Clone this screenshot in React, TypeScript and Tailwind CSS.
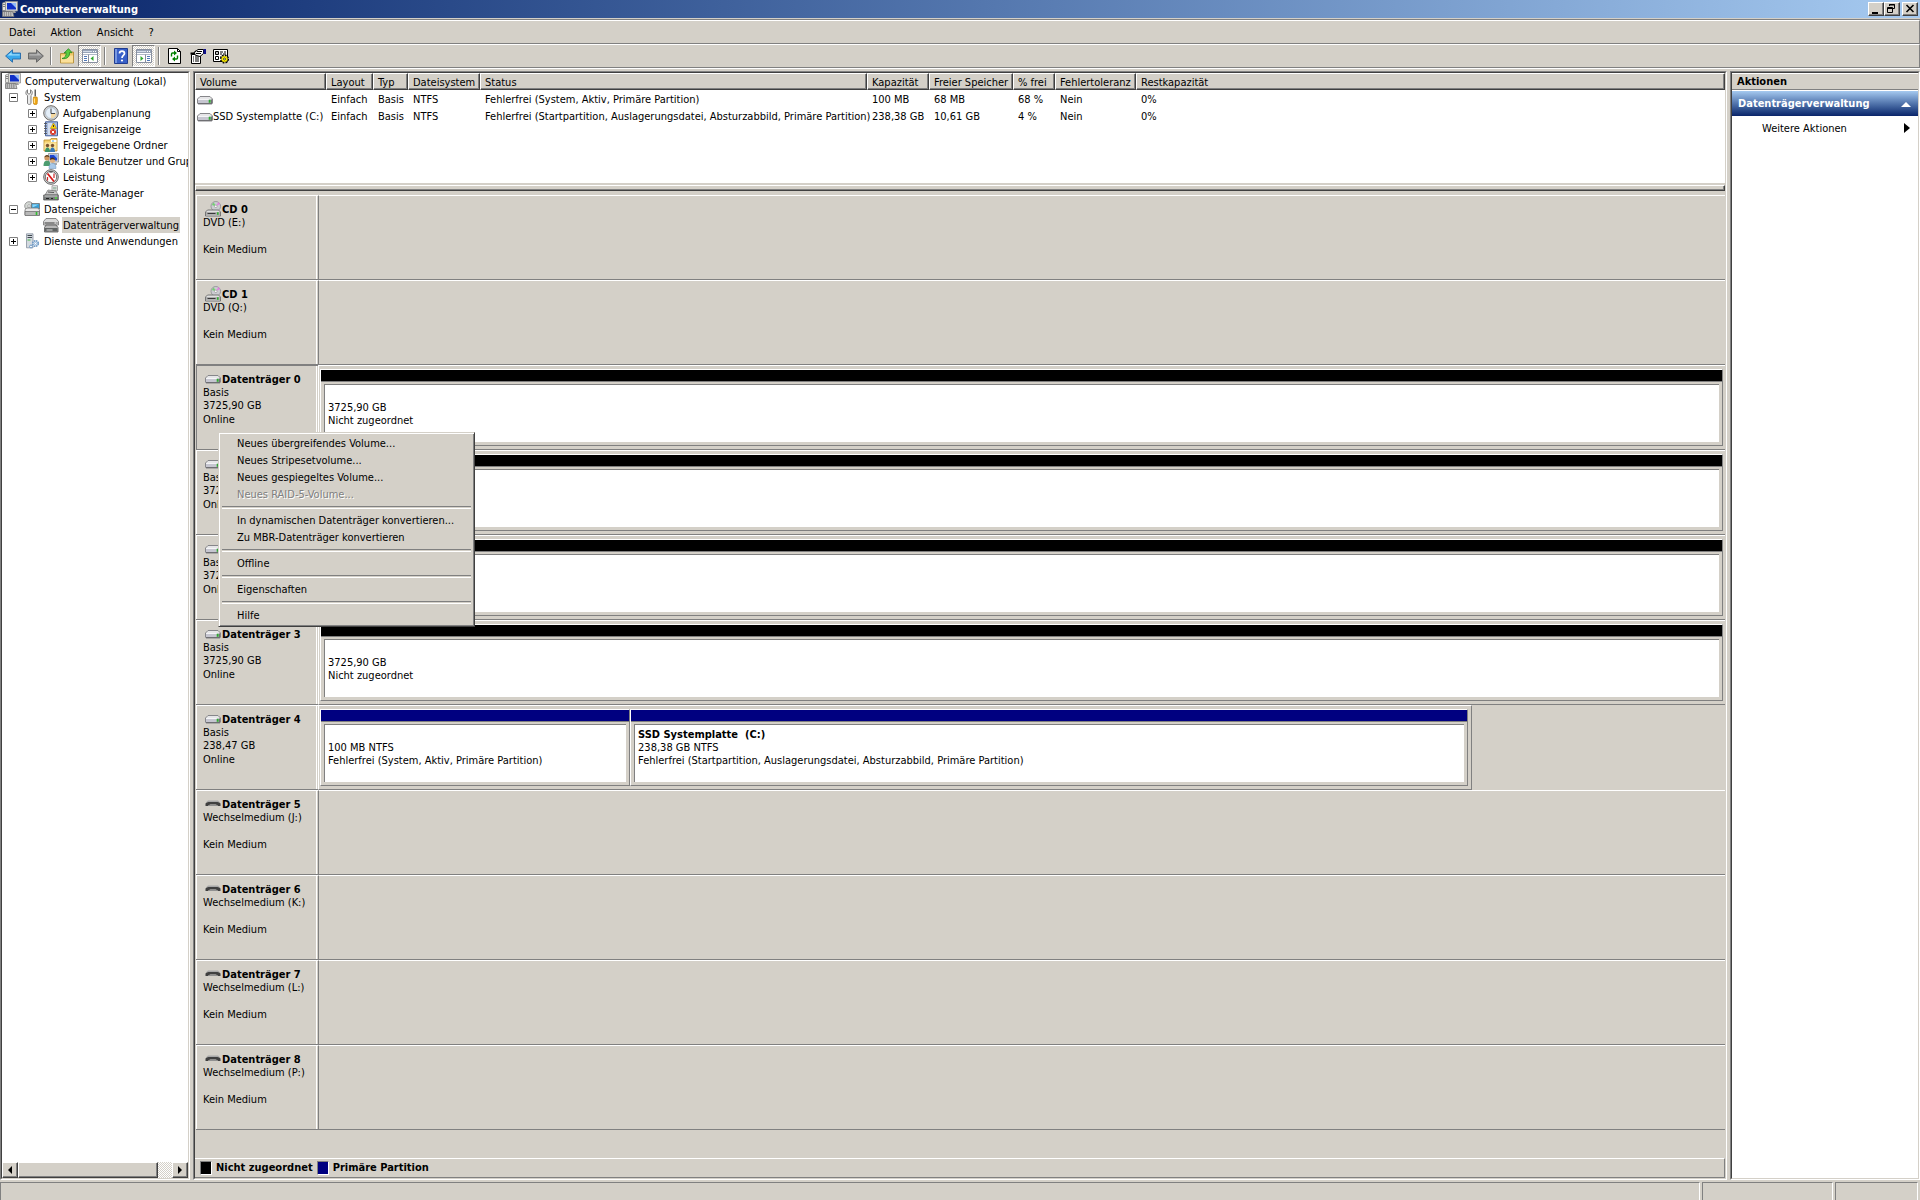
import React from 'react';
import clsx from 'clsx';

interface TreeNode {
  label: string;
  level: number;
  icon: React.ReactNode;
  state?: 'open' | 'closed';
  selected?: boolean;
}

interface Volume {
  name: string;
  layout: string;
  type: string;
  fs: string;
  status: string;
  capacity: string;
  free: string;
  percent: string;
  fault: string;
  overhead: string;
}

interface Partition {
  title?: string;
  size: string;
  status: string;
  primary?: boolean;
  className: string;
}

interface Disk {
  name: string;
  kind: 'cd' | 'disk' | 'removable';
  lines: [string, string, string];
  selected?: boolean;
  partial?: boolean;
  partitions?: Partition[];
}

const RAISED =
  'border border-white border-r-[#404040] border-b-[#404040] bg-[#d4d0c8] shadow-[inset_-1px_-1px_0_#808080]';
const DITHER = 'bg-[repeating-conic-gradient(#fff_0_25%,#d4d0c8_0_50%)] bg-[length:2px_2px]';

const Icon = ({ children }: { children: React.ReactNode }) => (
  <svg viewBox="0 0 16 16" className="h-4 w-4 shrink-0" aria-hidden="true">
    {children}
  </svg>
);

const ComputerIcon = () => (
  <Icon>
    <path d="M.5 2l3-1v8.500H.5z" fill="#e4e4e0" stroke="#8a8a8a" strokeWidth=".8" />
    <path d="M1 3.500h2M1 5.500h2" stroke="#666" strokeWidth=".8" />
    <path d="M3.500.5h12v9.500h-12z" fill="#dcdcd8" stroke="#909090" strokeWidth=".8" />
    <path d="M5 2h9v6.500H5z" fill="#1030c8" />
    <path d="M9 2h5v5z" fill="#90b8f8" />
    <path d="M8 10h5l1 2H8z" fill="#a0a0a0" />
    <path d="M.5 10.500h10l1.500 5H.5z" fill="#d8d8d8" stroke="#707070" strokeWidth=".8" />
    <path d="M1.500 12h8.500M1.500 14h9" stroke="#505050" strokeDasharray="1.500 .7" />
  </Icon>
);

const ToolsIcon = () => (
  <Icon>
    <path
      d="M3.500.8v3.400l1.500 1 1.500-1V.8C8 1.600 8.500 3 8.200 4.200 8 5.500 7.600 6 7 6.500V14.500c-.5 1.200-3 1.200-3.500 0V6.500C2.500 6 1.800 5 1.900 3.800 2 2.300 2.700 1.300 3.500.8z"
      fill="#ececec"
      stroke="#707070"
      strokeWidth=".9"
    />
    <path d="M10.500.5h1.500v7h-1.500z" fill="#606060" />
    <path d="M9.500 8h3.600l.4 2.500-.4 4.500c-.8.900-2.700.900-3.500 0l-.4-4.500z" fill="#f0a818" stroke="#b87808" strokeWidth=".6" />
    <path d="M10.500 9.500v4.500" stroke="#ffe08c" />
  </Icon>
);

const ClockIcon = () => (
  <Icon>
    <circle cx="8" cy="8" r="7.300" fill="#d4d4d4" stroke="#686868" />
    <circle cx="8" cy="8" r="5.500" fill="#e4eef8" stroke="#9ab" strokeWidth=".6" />
    <path d="M8 8h5.300A5.300 5.300 0 0 1 8 13.300z" fill="#f4d8a0" />
    <path d="M8 3.500V8.500h4" fill="none" stroke="#444" />
  </Icon>
);

const EventIcon = () => (
  <Icon>
    <path d="M2.500.8h12v14h-12z" fill="#a8bce0" stroke="#46609c" />
    <path d="M5 3h4M5 5h4M5 7h3M5 9h3M5 11h3M5 13h3" stroke="#fff" />
    <path d="M1 2.500h3M1 5h3M1 7.500h3M1 10h3M1 12.500h3" stroke="#555" strokeWidth=".9" />
    <path d="M10.500 2l3.200 5.500H7.300z" fill="#ffd200" stroke="#a88000" strokeWidth=".5" />
    <path d="M10.500 4v2" stroke="#333" />
    <circle cx="10" cy="11" r="3" fill="#d83828" />
    <path d="M8.800 9.800l2.400 2.400m0-2.400l-2.400 2.400" stroke="#fff" />
  </Icon>
);

const SharedFolderIcon = () => (
  <Icon>
    <path d="M1 3h6l1-1.500h6V14H1z" fill="#f4cf6c" stroke="#b88a28" strokeWidth=".8" />
    <path d="M8 3h5.500v2H8z" fill="#fff" />
    <path d="M9 4h2" stroke="#48a0e0" />
    <path d="M1.500 5.500h12V13h-12z" fill="#fbe39a" />
    <circle cx="4.500" cy="8.500" r="1.700" fill="#7a5230" />
    <path d="M2 15c0-3 1-4.500 2.500-4.500S7 12 7 15z" fill="#3c9468" />
    <circle cx="9.500" cy="8.500" r="1.700" fill="#7a5230" />
    <path d="M7 15c0-3 1-4.500 2.500-4.500S12 12 12 15z" fill="#3878b8" />
  </Icon>
);

const UsersIcon = () => (
  <Icon>
    <path d="M5.500.5h10V9h-10z" fill="#e0e0dc" stroke="#888" strokeWidth=".7" />
    <path d="M6.800 1.800h7.400v5.700H6.800z" fill="#1c44d0" />
    <path d="M10.500 1.800h3.700v3.700z" fill="#88b0f4" />
    <path d="M9 10h5v2H9z" fill="#aaa" />
    <circle cx="4" cy="5" r="2.600" fill="#d09860" />
    <path d="M1.400 4.500C1.400 1 6.600 1 6.600 4.500 5 3.300 3 3.300 1.400 4.500z" fill="#5c3c1c" />
    <path d="M.5 13c0-4 1.500-5.200 3.500-5.200S7.500 9 7.500 13z" fill="#4c9c70" />
    <circle cx="9.500" cy="7.500" r="2.500" fill="#e0b080" />
    <path d="M7 7c0-3.300 5-3.300 5 0-1.500-1-3.500-1-5 0z" fill="#4a3018" />
    <path d="M6 15.500c0-4 1.500-5.300 3.500-5.300s3.500 1.300 3.500 5.300z" fill="#a8c8e8" stroke="#6890b8" strokeWidth=".5" />
  </Icon>
);

const PerfIcon = () => (
  <Icon>
    <circle cx="8" cy="8" r="7.300" fill="#d8d8d8" stroke="#666" />
    <circle cx="8" cy="8" r="5.700" fill="#fff" stroke="#555" strokeWidth=".8" />
    <path d="M4.500 4.500l6.500 8" stroke="#d81818" strokeWidth="1.800" />
    <path d="M4.500 8v3.500M11 4.500V9" stroke="#c82828" strokeWidth="1.200" />
    <path d="M6.500 3h3" stroke="#333" />
  </Icon>
);

const DeviceIcon = () => (
  <Icon>
    <path d="M9 .7h5.500v5H9z" fill="#e8e8e8" stroke="#888" strokeWidth=".7" />
    <path d="M10 2h3.500v2.500H10z" fill="#a8c0b0" />
    <path d="M5 5l8 1 2 4H2z" fill="#c8c8c8" stroke="#707070" strokeWidth=".7" />
    <path d="M5 7l6 .5" stroke="#555" />
    <path d="M.7 10h14.600v5H.7z" fill="#7c8080" stroke="#444" strokeWidth=".7" />
    <path d="M1.500 11h13" stroke="#d0d0d0" />
    <path d="M3 13.500h3M8 13.500h2" stroke="#222" />
    <path d="M12 13h2" stroke="#50e040" strokeWidth="1.500" />
  </Icon>
);

const StorageIcon = () => (
  <Icon>
    <circle cx="5" cy="5" r="4.300" fill="#d4d8d4" stroke="#888" strokeWidth=".8" />
    <circle cx="5" cy="5" r="1.300" fill="#fff" stroke="#888" strokeWidth=".6" />
    <path d="M7.500 2.500h8V8h-8z" fill="#38a0d8" stroke="#707070" strokeWidth=".8" />
    <path d="M8.500 3.500h6l-6 3z" fill="#90d8f8" />
    <path d="M1 8.500L3 7h11l1.500 2v5H1z" fill="#e8e8e8" stroke="#777" strokeWidth=".8" />
    <path d="M1 10.500h14.500v4H1z" fill="#b8b8b8" stroke="#666" strokeWidth=".7" />
    <path d="M12.500 11v3" stroke="#30c030" strokeWidth="1.600" />
  </Icon>
);

const DiskMgmtIcon = () => (
  <Icon>
    <path d="M3 1.500h10l2.500 3V8H.5V4.500z" fill="#d8d8d8" stroke="#707070" strokeWidth=".8" />
    <path d="M1.500 5h13v2h-13z" fill="#888" />
    <path d="M3 8h10l2 2.500V15H1.500v-4.500z" fill="#b8b8b8" stroke="#505050" strokeWidth=".8" />
    <path d="M2 11h12.500v3.500H2z" fill="#606464" />
    <path d="M3.500 13h6" stroke="#ddd" />
    <path d="M11.500 6h2" stroke="#fff" />
  </Icon>
);

const ServicesIcon = () => (
  <Icon>
    <path d="M2.500.8H9v14H2.500z" fill="#d4dae0" stroke="#8890a0" strokeWidth=".8" />
    <path d="M3.500 2.500H8M3.500 4.500H8" stroke="#404850" />
    <path d="M3.500 7h3" stroke="#40b840" />
    <circle cx="11.500" cy="10.500" r="2.800" fill="#dce8f4" stroke="#6c98c4" strokeWidth="1.600" strokeDasharray="1.600 .6" />
    <circle cx="7" cy="13.500" r="1.400" fill="#fff" stroke="#6c98c4" />
    <circle cx="11.500" cy="10.500" r="1" fill="#fff" stroke="#7ca4cc" strokeWidth=".6" />
  </Icon>
);

const DriveIcon = () => (
  <Icon>
    <path d="M3 4.500h10L15.500 7v4q0 .8-1 .8h-13q-1 0-1-.8V7z" fill="#e6e6e8" stroke="#86868a" />
    <path d="M1 7.500h14v3.800H1z" fill="#c6c6d0" />
    <path d="M1 7.500h11" stroke="#f4f4f6" />
    <path d="M1 11.700h14" stroke="#606064" />
    <path d="M12.700 7.800v3" stroke="#30a830" strokeWidth="2" />
    <path d="M14.500 7.500v3.700" stroke="#707074" />
  </Icon>
);

const RemovableIcon = () => (
  <Icon>
    <path d="M3 4.500h10l2 2H1z" fill="#a8a8a8" />
    <path d="M.5 7.500Q1.500 6 3.500 6h9q2 0 3 1.500V10H13q-1-1.500-2.500-1.500h-5Q4 8.500 3 10H.5z" fill="#404040" />
    <path d="M3 10q1-1.500 2.500-1.500h5Q12 8.500 13 10z" fill="#909090" />
  </Icon>
);

const CdIcon = () => (
  <Icon>
    <circle cx="10.800" cy="5.300" r="4.800" fill="#ccccd2" stroke="#8c8c90" strokeWidth=".8" />
    <path d="M10.800 5.300L6.800 4l2-2.500z" fill="#70d070" />
    <path d="M10.800 5.300L13.500 1l1.500 2z" fill="#e080dc" />
    <circle cx="10.800" cy="5.300" r="1.300" fill="#fff" stroke="#888" strokeWidth=".6" />
    <path d="M2.500 9h11l2 2v4H.5v-4z" fill="#e0e0e0" stroke="#6c6c6c" strokeWidth=".9" />
    <path d="M1 11h14v3.500H1z" fill="#b0b0b0" />
    <path d="M2.500 12.500h8" stroke="#383838" />
    <path d="M12.800 11.300v2.500" stroke="#30b030" strokeWidth="1.600" />
  </Icon>
);

const BackIcon = () => (
  <Icon>
    <path d="M.6 8L7.500 1.800V5h8v6h-8v3.200z" fill="#38a8ec" stroke="#2468a8" strokeWidth=".9" strokeLinejoin="round" />
    <path d="M2.500 7.600L6.700 4v2.200h8v1.400z" fill="#98dcfc" />
  </Icon>
);

const ForwardIcon = () => (
  <Icon>
    <path d="M15.400 8L8.500 1.800V5h-8v6h8v3.200z" fill="#8c8c8c" stroke="#606060" strokeWidth=".9" strokeLinejoin="round" />
    <path d="M13.500 7.600L9.300 4v2.200h-8v1.400z" fill="#b8b8b8" />
  </Icon>
);

const UpFolderIcon = () => (
  <Icon>
    <path d="M1.500 5.500h5L8 4h6.500v11h-13z" fill="#f0c868" stroke="#b08830" strokeWidth=".8" />
    <path d="M2 7.500h12v7H2z" fill="#fbe09a" />
    <path d="M3 10.500C6 10 7.500 7.500 7 4.500L5 5 9.500.7l3.500 4-2.500-.2c.5 4-2.500 7-7.500 6z" fill="#58cc40" stroke="#288820" strokeWidth=".8" />
  </Icon>
);

const PaneIcon = ({ flip }: { flip?: boolean }) => (
  <Icon>
    <path d="M.5 1.500h15v13H.5z" fill="#fff" stroke="#8890a0" />
    <path d="M1 2h14v3H1z" fill="#98a4b8" />
    <path d="M1 3.500h9" stroke="#d4dce8" />
    <path d="M11 3.500h1M13 3.500h1" stroke="#fff" />
    <path d="M1 6.500h14" stroke="#b0b8c8" />
    <g transform={flip ? 'translate(16 0) scale(-1 1)' : undefined}>
      <path d="M6.500 6.500v8" stroke="#8890a0" />
      <path d="M2 8.500h3M2 10.500h3M2 12.500h3" stroke="#5078b8" />
      <path d="M11.500 8v5L8.500 10.500z" fill="#30a830" />
    </g>
  </Icon>
);

const HelpIcon = () => (
  <Icon>
    <path d="M1.500.5h13v15h-13z" fill="#3860c8" stroke="#203c90" />
    <path d="M2 1h2v14H2z" fill="#7898e0" />
    <path d="M6.500 5.500c0-3.200 5-3.200 5 0 0 2-2.500 2-2.500 4.500" fill="none" stroke="#fff" strokeWidth="1.700" />
    <circle cx="9" cy="12.500" r="1.100" fill="#fff" />
  </Icon>
);

const RefreshIcon = () => (
  <Icon>
    <path d="M1.500.5h9l3 3v12h-12z" fill="#fff" stroke="#000" />
    <path d="M10.500.5v3h3" fill="none" stroke="#000" />
    <path d="M4.500 8.500V6q0-1 1-1H8" fill="none" stroke="#008000" strokeWidth="1.400" />
    <path d="M7 2.500L10 5 7 7.500zM8 8.500L5 11l3 2.500z" fill="#008000" />
    <path d="M10.500 7.500V10q0 1-1 1H7" fill="none" stroke="#008000" strokeWidth="1.400" />
  </Icon>
);

const PropertiesIcon = () => (
  <Icon>
    <path d="M1.500 6.500h9v9h-9z" fill="#fff" stroke="#000" />
    <path d="M.5 6.500V4.500h3l2-2h4v4z" fill="#000" />
    <path d="M3 9h1M3 11h1M3 13h1M5 9h4M5 11h4M5 13h4" stroke="#000" />
    <path d="M4.500 4.500L8 1.500h5.500v4L10 8.500 5 7z" fill="#fff" stroke="#000" />
    <path d="M6 5.500h5M7 3.500h5" stroke="#000" />
    <path d="M13.500 1H16v5h-2.500z" fill="#10108c" />
  </Icon>
);

const SettingsIcon = () => (
  <Icon>
    <path d="M.5 1.500h14v12H.5z" fill="#fff" stroke="#000" />
    <path d="M2.500 3.500h3v3h-3zM2.500 8.500h3v3h-3z" fill="none" stroke="#000" />
    <path d="M3.500 4.500h1v1h-1z" fill="#000" />
    <path d="M7 4h3M11 4h2M7 6h2M10 6h3M7 9h2" stroke="#000" />
    <circle cx="11.500" cy="11" r="3.200" fill="none" stroke="#000" strokeWidth="2.800" strokeDasharray="1.500 1" />
    <circle cx="11.500" cy="11" r="3" fill="#fff200" stroke="#a09000" strokeWidth=".5" />
    <circle cx="11.500" cy="11" r="1" fill="#fff" stroke="#000" strokeWidth=".7" />
  </Icon>
);

const TREE: TreeNode[] = [
  { label: 'Computerverwaltung (Lokal)', level: 0, icon: <ComputerIcon /> },
  { label: 'System', level: 1, icon: <ToolsIcon />, state: 'open' },
  { label: 'Aufgabenplanung', level: 2, icon: <ClockIcon />, state: 'closed' },
  { label: 'Ereignisanzeige', level: 2, icon: <EventIcon />, state: 'closed' },
  { label: 'Freigegebene Ordner', level: 2, icon: <SharedFolderIcon />, state: 'closed' },
  { label: 'Lokale Benutzer und Gruppen', level: 2, icon: <UsersIcon />, state: 'closed' },
  { label: 'Leistung', level: 2, icon: <PerfIcon />, state: 'closed' },
  { label: 'Geräte-Manager', level: 2, icon: <DeviceIcon /> },
  { label: 'Datenspeicher', level: 1, icon: <StorageIcon />, state: 'open' },
  { label: 'Datenträgerverwaltung', level: 2, icon: <DiskMgmtIcon />, selected: true },
  { label: 'Dienste und Anwendungen', level: 1, icon: <ServicesIcon />, state: 'closed' },
];

const COLUMNS = [
  { label: 'Volume', width: 'w-[131px]' },
  { label: 'Layout', width: 'w-[47px]' },
  { label: 'Typ', width: 'w-[35px]' },
  { label: 'Dateisystem', width: 'w-[72px]' },
  { label: 'Status', width: 'w-[387px]' },
  { label: 'Kapazität', width: 'w-[62px]' },
  { label: 'Freier Speicher', width: 'w-[84px]' },
  { label: '% frei', width: 'w-[42px]' },
  { label: 'Fehlertoleranz', width: 'w-[81px]' },
  { label: 'Restkapazität', width: 'w-auto' },
];

const VOLUMES: Volume[] = [
  {
    name: '',
    layout: 'Einfach',
    type: 'Basis',
    fs: 'NTFS',
    status: 'Fehlerfrei (System, Aktiv, Primäre Partition)',
    capacity: '100 MB',
    free: '68 MB',
    percent: '68 %',
    fault: 'Nein',
    overhead: '0%',
  },
  {
    name: 'SSD Systemplatte (C:)',
    layout: 'Einfach',
    type: 'Basis',
    fs: 'NTFS',
    status: 'Fehlerfrei (Startpartition, Auslagerungsdatei, Absturzabbild, Primäre Partition)',
    capacity: '238,38 GB',
    free: '10,61 GB',
    percent: '4 %',
    fault: 'Nein',
    overhead: '0%',
  },
];

const unallocated: Partition[] = [{ size: '3725,90 GB', status: 'Nicht zugeordnet', className: 'flex-1' }];

const DISKS: Disk[] = [
  { name: 'CD 0', kind: 'cd', lines: ['DVD (E:)', '', 'Kein Medium'] },
  { name: 'CD 1', kind: 'cd', lines: ['DVD (Q:)', '', 'Kein Medium'] },
  { name: 'Datenträger 0', kind: 'disk', lines: ['Basis', '3725,90 GB', 'Online'], partitions: unallocated, selected: true },
  { name: 'Datenträger 1', kind: 'disk', lines: ['Basis', '3725,90 GB', 'Online'], partitions: unallocated },
  { name: 'Datenträger 2', kind: 'disk', lines: ['Basis', '3725,90 GB', 'Online'], partitions: unallocated },
  { name: 'Datenträger 3', kind: 'disk', lines: ['Basis', '3725,90 GB', 'Online'], partitions: unallocated },
  {
    name: 'Datenträger 4',
    kind: 'disk',
    lines: ['Basis', '238,47 GB', 'Online'],
    partial: true,
    partitions: [
      { size: '100 MB NTFS', status: 'Fehlerfrei (System, Aktiv, Primäre Partition)', primary: true, className: 'w-[27%]' },
      {
        title: 'SSD Systemplatte  (C:)',
        size: '238,38 GB NTFS',
        status: 'Fehlerfrei (Startpartition, Auslagerungsdatei, Absturzabbild, Primäre Partition)',
        primary: true,
        className: 'flex-1',
      },
    ],
  },
  { name: 'Datenträger 5', kind: 'removable', lines: ['Wechselmedium (J:)', '', 'Kein Medium'] },
  { name: 'Datenträger 6', kind: 'removable', lines: ['Wechselmedium (K:)', '', 'Kein Medium'] },
  { name: 'Datenträger 7', kind: 'removable', lines: ['Wechselmedium (L:)', '', 'Kein Medium'] },
  { name: 'Datenträger 8', kind: 'removable', lines: ['Wechselmedium (P:)', '', 'Kein Medium'] },
];

const MENU_GROUPS = [
  [
    { label: 'Neues übergreifendes Volume...' },
    { label: 'Neues Stripesetvolume...' },
    { label: 'Neues gespiegeltes Volume...' },
    { label: 'Neues RAID-5-Volume...', disabled: true },
  ],
  [{ label: 'In dynamischen Datenträger konvertieren...' }, { label: 'Zu MBR-Datenträger konvertieren' }],
  [{ label: 'Offline' }],
  [{ label: 'Eigenschaften' }],
  [{ label: 'Hilfe' }],
];

const DISK_ICONS = { cd: <CdIcon />, disk: <DriveIcon />, removable: <RemovableIcon /> };

// Two-step sunken frame used by all three panes
const Pane = ({ className, children }: { className?: string; children: React.ReactNode }) => (
  <div className={clsx('flex min-w-0 border border-[#808080] border-r-white border-b-white', className)}>
    <div className="flex min-w-0 flex-1 flex-col overflow-hidden border border-[#404040] border-r-[#d4d0c8] border-b-[#d4d0c8]">
      {children}
    </div>
  </div>
);

const TitleBar = () => (
  <header className="flex h-[18px] items-center bg-linear-to-r from-[#0a246a] to-[#a6caf0] px-[2px]">
    <ComputerIcon />
    <h1 className="ml-[2px] flex-1 font-bold text-white">Computerverwaltung</h1>
    <button aria-label="Minimieren" className={clsx('flex h-[14px] w-4', RAISED)}>
      <svg viewBox="0 0 14 12" className="h-3 w-[14px]">
        <path d="M3 9h6v2H3z" />
      </svg>
    </button>
    <button aria-label="Verkleinern" className={clsx('flex h-[14px] w-4', RAISED)}>
      <svg viewBox="0 0 14 12" className="h-3 w-[14px]">
        <path d="M4.500 3V1.500h5v4H8M4 2h6" fill="none" stroke="#000" />
        <path d="M2.500 4.500h5v5h-5zM2 5.500h6" fill="none" stroke="#000" />
      </svg>
    </button>
    <button aria-label="Schließen" className={clsx('ml-[2px] flex h-[14px] w-4', RAISED)}>
      <svg viewBox="0 0 14 12" className="h-3 w-[14px]">
        <path d="M3.500 2l7 7m0-7l-7 7" stroke="#000" strokeWidth="1.600" />
      </svg>
    </button>
  </header>
);

const ToolButton = ({ label, pressed, children }: { label: string; pressed?: boolean; children: React.ReactNode }) => (
  <button
    aria-label={label}
    aria-pressed={pressed}
    className={clsx(
      'flex h-[22px] w-[23px] items-center justify-center border',
      pressed ? clsx('border-[#808080] border-r-white border-b-white', DITHER) : 'border-transparent',
    )}
  >
    {children}
  </button>
);

const ToolSeparator = () => <div className="mx-[3px] h-[18px] w-[2px] border-l border-[#808080] bg-white" />;

const Toolbar = () => (
  <div className="flex h-6 items-center border border-l-0 border-white border-r-[#808080] border-b-[#808080] pl-px">
    <ToolButton label="Zurück"><BackIcon /></ToolButton>
    <ToolButton label="Vorwärts"><ForwardIcon /></ToolButton>
    <ToolSeparator />
    <ToolButton label="Eine Ebene nach oben"><UpFolderIcon /></ToolButton>
    <ToolButton label="Konsolenstruktur" pressed><PaneIcon /></ToolButton>
    <ToolSeparator />
    <ToolButton label="Hilfe"><HelpIcon /></ToolButton>
    <ToolButton label="Aktionsbereich" pressed><PaneIcon flip /></ToolButton>
    <ToolSeparator />
    <ToolButton label="Aktualisieren"><RefreshIcon /></ToolButton>
    <ToolButton label="Eigenschaften"><PropertiesIcon /></ToolButton>
    <ToolButton label="Einstellungen"><SettingsIcon /></ToolButton>
  </div>
);

const Tree = () => (
  <ul className="flex-1 overflow-hidden bg-white">
    {TREE.map((node) => (
      <li
        key={node.label}
        className={clsx(
          'flex h-4 items-center whitespace-nowrap',
          node.level === 0 && 'pl-[3px]',
          node.level === 1 && 'pl-[7px]',
          node.level === 2 && 'pl-[26px]',
        )}
      >
        {node.level > 0 &&
          (node.state ? (
            <button aria-label={node.label} aria-expanded={node.state === 'open'} className="mr-[6px]">
              <svg viewBox="0 0 9 9" className="h-[9px] w-[9px]">
                <path d="M.5.5h8v8h-8z" fill="#fff" stroke="#808080" />
                <path d={node.state === 'open' ? 'M2 4.5h5' : 'M2 4.5h5M4.5 2v5'} stroke="#000" />
              </svg>
            </button>
          ) : (
            <span className="mr-[6px] w-[9px]" />
          ))}
        {node.icon}
        <button className={clsx('ml-[3px] h-4 px-px', node.selected && 'bg-[#d4d0c8]')}>{node.label}</button>
      </li>
    ))}
  </ul>
);

const HorizontalScroll = () => (
  <div className={clsx('flex h-4', DITHER)}>
    <button aria-label="Nach links" className={clsx('flex w-4 items-center justify-center', RAISED)}>
      <svg viewBox="0 0 8 8" className="h-2 w-2">
        <path d="M6 0v8L2 4z" />
      </svg>
    </button>
    <div className={clsx('w-[140px]', RAISED)} />
    <button aria-label="Nach rechts" className={clsx('ml-auto flex w-4 items-center justify-center', RAISED)}>
      <svg viewBox="0 0 8 8" className="h-2 w-2">
        <path d="M2 0v8l4-4z" />
      </svg>
    </button>
  </div>
);

const VolumeTable = () => (
  <div className="h-[110px] bg-white">
    <table className="w-full table-fixed border-separate border-spacing-0 whitespace-nowrap text-left">
      <thead>
        <tr>
          {COLUMNS.map((column) => (
            <th
              key={column.label}
              className={clsx('h-[17px] p-0 pt-[2px] pl-1 leading-[13px] font-normal', RAISED, column.width)}
            >
              {column.label}
            </th>
          ))}
        </tr>
      </thead>
      <tbody>
        {VOLUMES.map((volume) => (
          <tr key={volume.status}>
            <td className="p-0 pt-[2px] pl-[2px]">
              <span className="flex h-[15px] items-center">
                <DriveIcon />
                {volume.name}
              </span>
            </td>
            <td className="p-0 pt-[2px] pl-[5px]">{volume.layout}</td>
            <td className="p-0 pt-[2px] pl-[5px]">{volume.type}</td>
            <td className="p-0 pt-[2px] pl-[5px]">{volume.fs}</td>
            <td className="p-0 pt-[2px] pl-[5px]">{volume.status}</td>
            <td className="p-0 pt-[2px] pl-[5px]">{volume.capacity}</td>
            <td className="p-0 pt-[2px] pl-[5px]">{volume.free}</td>
            <td className="p-0 pt-[2px] pl-[5px]">{volume.percent}</td>
            <td className="p-0 pt-[2px] pl-[5px]">{volume.fault}</td>
            <td className="p-0 pt-[2px] pl-[5px]">{volume.overhead}</td>
          </tr>
        ))}
      </tbody>
    </table>
  </div>
);

const ContextMenu = () => (
  <div
    role="menu"
    className="absolute top-[67px] left-[22px] z-10 w-[257px] border border-[#d4d0c8] border-r-[#404040] border-b-[#404040] bg-[#d4d0c8] p-[2px] shadow-[inset_1px_1px_0_#fff,inset_-1px_-1px_0_#808080]"
  >
    {MENU_GROUPS.map((group, idx) => (
      <div key={group[0].label}>
        {idx > 0 && <hr className="mx-px my-[3px] h-[3px] border-0 border-t border-b border-t-[#808080] border-b-white" />}
        {group.map((item) => (
          <button
            key={item.label}
            role="menuitem"
            disabled={'disabled' in item}
            className="block h-[17px] w-full pl-4 text-left disabled:text-[#808080] disabled:[text-shadow:1px_1px_0_#fff]"
          >
            {item.label}
          </button>
        ))}
      </div>
    ))}
  </div>
);

const PartitionBox = ({ partition }: { partition: Partition }) => (
  <div className={clsx('flex min-w-0 flex-col border border-white border-r-[#808080] border-b-[#808080]', partition.className)}>
    <div className={clsx('h-3 border-b border-[#808080]', partition.primary ? 'bg-[#000080]' : 'bg-black')} />
    <div className="mx-[3px] mt-[2px] mb-[3px] flex-1 overflow-hidden border-t border-l border-[#808080] bg-white pt-[3px] pl-[3px] leading-[13px] whitespace-pre">
      <p className="h-[13px] font-bold">{partition.title}</p>
      <p>{partition.size}</p>
      <p>{partition.status}</p>
    </div>
  </div>
);

const DiskRow = ({ disk }: { disk: Disk }) => (
  <li className="relative flex h-[85px]">
    <div
      className={clsx(
        'w-[122px] shrink-0 border-t border-b border-b-[#808080] pr-px',
        disk.selected ? 'border-t-[#808080]' : 'border-t-white',
      )}
    >
      <div
        className={clsx(
          'h-full border-r border-l border-r-white pt-[6px] pl-[6px] leading-[13px]',
          disk.selected ? 'border-l-[#808080]' : 'border-l-white',
        )}
      >
        <div className="flex h-[14px] items-center gap-px pl-[2px] font-bold whitespace-nowrap">
          {DISK_ICONS[disk.kind]}
          <span>{disk.name}</span>
        </div>
        <p className="h-[13px]">{disk.lines[0]}</p>
        <p className="h-[14px]">{disk.lines[1]}</p>
        <p className="h-[13px]">{disk.lines[2]}</p>
      </div>
    </div>
    <div
      className={clsx(
        'flex border border-t-white border-b-[#808080]',
        disk.partitions ? 'border-l-white pt-[3px] pb-[3px] pl-px' : 'border-l-[#808080]',
        disk.partial ? 'w-[75.5%] border-r-[#808080] pr-[3px]' : 'flex-1 border-r-0 pr-[2px]',
      )}
    >
      {disk.partitions?.map((partition) => (
        <PartitionBox key={partition.size} partition={partition} />
      ))}
    </div>
    {disk.selected && <ContextMenu />}
  </li>
);

const Legend = () => (
  <div className="flex h-5 items-center gap-1 border border-l-0 border-white border-r-[#808080] border-b-[#808080] pl-[5px] font-bold">
    <span className="h-[14px] w-3 border border-[#808080] border-r-white border-b-white bg-black" />
    <span className="pb-[2px]">Nicht zugeordnet</span>
    <span className="h-[14px] w-3 border border-[#808080] border-r-white border-b-white bg-[#000080]" />
    <span className="pb-[2px]">Primäre Partition</span>
  </div>
);

const ActionsPane = () => (
  <Pane className="w-[190px] shrink-0">
    <h2 className="h-[17px] border-t border-b border-t-white border-b-[#808080] pl-[5px] font-bold">Aktionen</h2>
    <div className="flex flex-1 flex-col bg-white">
      <button className="mt-px flex h-[25px] items-center justify-between bg-linear-to-b from-[#a6caf0] to-[#0a246a] pr-[7px] pl-[6px] font-bold text-white">
        Datenträgerverwaltung
        <svg viewBox="0 0 10 6" className="h-[6px] w-[10px]">
          <path d="M0 6L5 1l5 5z" fill="#fff" />
        </svg>
      </button>
      <button className="flex h-6 items-center justify-between pr-2 pl-[30px]">
        Weitere Aktionen
        <svg viewBox="0 0 6 10" className="h-[10px] w-[6px]">
          <path d="M0 0l6 5-6 5z" />
        </svg>
      </button>
    </div>
  </Pane>
);

export default function App() {
  return (
    <div className="flex h-screen flex-col overflow-hidden bg-[#d4d0c8] font-['DejaVu_Sans_Condensed','DejaVu_Sans',sans-serif] text-[11px] leading-[15px] text-black">
      <TitleBar />
      <div className="mt-px border-t border-[#808080]">
        <nav className="flex h-6 items-center gap-[15px] border border-l-0 border-white border-r-[#808080] border-b-[#808080] pl-[9px]">
          <button>Datei</button>
          <button>Aktion</button>
          <button>Ansicht</button>
          <button>?</button>
        </nav>
        <Toolbar />
        <div className="h-px bg-white" />
      </div>

      <div className="mt-[2px] flex min-h-0 flex-1 gap-[3px]">
        <Pane className="w-[190px] shrink-0">
          <Tree />
          <HorizontalScroll />
        </Pane>

        <Pane className="flex-1">
          <VolumeTable />
          <div className={clsx('mt-[2px] h-[6px] shrink-0', RAISED)} />
          <ul className="flex-1 overflow-hidden pt-1 pl-px">
            {DISKS.map((disk) => (
              <DiskRow key={disk.name} disk={disk} />
            ))}
          </ul>
          <Legend />
        </Pane>

        <ActionsPane />
      </div>

      <footer className="mt-[2px] flex h-[18px] gap-[2px] pr-[2px]">
        <div className="flex-1 border-t border-r border-l border-[#808080] border-r-white" />
        <div className="w-[131px] border-t border-r border-l border-[#808080] border-r-white" />
        <div className="w-[83px] border-t border-r border-l border-[#808080] border-r-white" />
      </footer>
    </div>
  );
}
